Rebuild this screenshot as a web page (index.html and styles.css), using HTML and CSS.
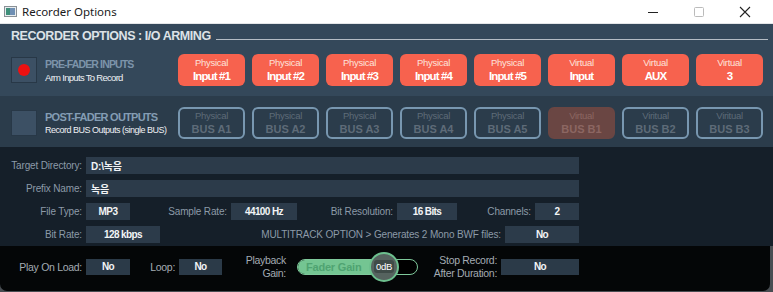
FILE: index.html
```html
<!DOCTYPE html>
<html lang="en">
<head>
  <meta charset="UTF-8" />
  <title>Recorder Options</title>
  <link rel="stylesheet" href="styles.css">
</head>
<body>

  <div class="window">
    <div class="titlebar">
      <svg class="app-icon" width="13" height="11" viewBox="0 0 13 11">
        <rect x="0.5" y="0.5" width="12" height="10" fill="#e8ecee" stroke="#8a9096"/>
        <rect x="2" y="2" width="4" height="7" fill="#3f8f7a"/>
        <rect x="6" y="2" width="5" height="7" fill="#6f8fb4"/>
      </svg>
      <span class="window-title">Recorder Options</span>
      <div class="window-controls">
        <svg width="46" height="24" viewBox="0 0 46 24"><path d="M18 12.5h10" stroke="#222" stroke-width="1"/></svg>
        <svg width="46" height="24" viewBox="0 0 46 24"><rect x="18.5" y="7.5" width="9" height="9" rx="1" fill="none" stroke="#bbb" stroke-width="1"/></svg>
        <svg width="46" height="24" viewBox="0 0 46 24"><path d="M18 7l10 10M28 7L18 17" stroke="#222" stroke-width="1.1"/></svg>
      </div>
    </div>

    <div class="arming">
      <div class="section-title">RECORDER OPTIONS : I/O ARMING</div>
      <div class="io-row">
        <div class="io-label">
          <div class="check"><span class="dot"></span></div>
          <div>
            <div class="io-name">PRE-FADER INPUTS</div>
            <div class="io-desc">Arm Inputs To Record</div>
          </div>
        </div>
        <div class="io-buttons" id="inputs"></div>
      </div>
    </div>

    <div class="io-row post">
      <div class="io-label">
        <div class="check"></div>
        <div>
          <div class="io-name">POST-FADER OUTPUTS</div>
          <div class="io-desc">Record BUS Outputs (single BUS)</div>
        </div>
      </div>
      <div class="io-buttons" id="outputs"></div>
    </div>

    <div class="form">
      <div class="form-row">
        <label class="lbl w82">Target Directory:</label>
        <div class="box text wide">D:\녹음</div>
      </div>
      <div class="form-row">
        <label class="lbl w82">Prefix Name:</label>
        <div class="box text wide">녹음</div>
      </div>
      <div class="form-row">
        <label class="lbl w82">File Type:</label>
        <div class="box w44">MP3</div>
        <label class="lbl w97">Sample Rate:</label>
        <div class="box w66">44100 Hz</div>
        <label class="lbl w96">Bit Resolution:</label>
        <div class="box w60">16 Bits</div>
        <label class="lbl w73">Channels:</label>
        <div class="box w44">2</div>
      </div>
      <div class="form-row">
        <label class="lbl w82">Bit Rate:</label>
        <div class="box w74">128 kbps</div>
        <label class="lbl w341">MULTITRACK OPTION &gt; Generates 2 Mono BWF files:</label>
        <div class="box w74">No</div>
      </div>
    </div>

    <div class="playback">
      <label class="lbl dark w81">Play On Load:</label>
      <div class="box w44">No</div>
      <label class="lbl dark w46">Loop:</label>
      <div class="box w43">No</div>
      <label class="lbl dark two-line w68">Playback<br>Gain:</label>
      <div class="fader">
        <div class="fader-fill"><span>Fader Gain</span></div>
        <div class="knob"><span>0dB</span></div>
      </div>
      <label class="lbl dark two-line w79">Stop Record:<br>After Duration:</label>
      <div class="box w78">No</div>
    </div>
  </div>

  <script>
    const inputs = [
      ["Physical", "Input #1"], ["Physical", "Input #2"], ["Physical", "Input #3"],
      ["Physical", "Input #4"], ["Physical", "Input #5"], ["Virtual", "Input"],
      ["Virtual", "AUX"], ["Virtual", "3"]
    ];
    const outputs = [
      ["Physical", "BUS A1"], ["Physical", "BUS A2"], ["Physical", "BUS A3"],
      ["Physical", "BUS A4"], ["Physical", "BUS A5"], ["Virtual", "BUS B1", true],
      ["Viritual", "BUS B2"], ["Viritual", "BUS B3"]
    ];

    function addButtons(el, list, cls) {
      list.forEach(([top, name, on]) => {
        const btn = document.createElement("div");
        btn.className = "io-btn " + cls + (on ? " on" : "");
        btn.innerHTML = `<span class="kind">${top}</span><span class="name">${name}</span>`;
        el.appendChild(btn);
      });
    }

    addButtons(document.getElementById("inputs"), inputs, "armed");
    addButtons(document.getElementById("outputs"), outputs, "idle");
  </script>

</body>
</html>
```

FILE: styles.css
```css
body {
  margin: 0;
  background: #484d52;
  font-family: 'Liberation Sans', Arial, 'Noto Sans CJK KR', sans-serif;
}

.window {
  width: 773px;
  height: 292px;
  display: flex;
  flex-direction: column;
  overflow: hidden;
  white-space: nowrap;
}

.titlebar {
  height: 23px;
  flex-shrink: 0;
  background: #fff;
  border-bottom: 1px solid #e4e6e8;
  display: flex;
  align-items: center;
  padding-left: 4px;
  font-family: 'Noto Sans', 'Open Sans', sans-serif;
}

.app-icon {
  margin-right: 5px;
}

.window-title {
  font-size: 11.5px;
  color: #1a1a1a;
}

.window-controls {
  margin-left: auto;
  display: flex;
  margin-right: 5px;
}

.arming {
  background: #34485a;
  padding: 2px 0 10px;
}

.section-title {
  height: 20px;
  display: flex;
  align-items: center;
  padding-left: 11px;
  font-size: 12.5px;
  font-weight: bold;
  letter-spacing: -0.45px;
  color: #dde2e7;
}

.section-title::after {
  content: "";
  flex: 1;
  height: 1px;
  background: #b4bcc4;
  margin: 7px 5px 0 5px;
}

.io-row {
  display: flex;
  align-items: center;
  margin-top: 8px;
}

.io-row.post {
  margin-top: 0;
  background: #2b3c4b;
  padding: 11px 0 8px;
}

.io-label {
  width: 167px;
  padding-left: 11px;
  display: flex;
  align-items: center;
  gap: 8px;
}

.check {
  width: 24px;
  height: 24px;
  background: #3c5064;
  border: 1px solid #283847;
  display: flex;
  align-items: center;
  justify-content: center;
  flex-shrink: 0;
}

.dot {
  width: 12px;
  height: 12px;
  border-radius: 50%;
  background: #ee1111;
}

.io-name {
  font-size: 10.5px;
  font-weight: bold;
  letter-spacing: -0.85px;
  color: #7d94aa;
}

.post .io-name {
  font-size: 11px;
  letter-spacing: -0.75px;
  color: #849db4;
}

.io-desc {
  font-size: 9.5px;
  letter-spacing: -0.7px;
  color: #eef1f4;
  margin-top: 2px;
}

.post .io-desc {
  font-size: 9px;
  letter-spacing: -0.5px;
}

.io-buttons {
  display: flex;
  gap: 7px;
}

.io-btn {
  width: 67px;
  height: 32px;
  box-sizing: border-box;
  border-radius: 6px;
  display: flex;
  flex-direction: column;
  align-items: center;
  justify-content: center;
}

.io-btn .kind {
  font-size: 9.5px;
  letter-spacing: -0.3px;
  line-height: 12px;
}

.io-btn .name {
  font-size: 11.5px;
  font-weight: bold;
  letter-spacing: -0.9px;
  line-height: 15px;
}

.io-btn.armed {
  background: #f7624e;
  color: #fff;
}

.io-btn.armed .kind {
  color: #fde3dc;
}

.io-btn.idle {
  border: 2px solid #7897b0;
  color: #5e6b78;
}

.io-btn.idle .name {
  letter-spacing: 0;
  font-size: 11px;
}

.io-btn.idle.on {
  background: #6a4643;
  border-color: #6a4643;
  color: #8c6662;
}

.form {
  background: #151f29;
  padding: 10px 0 3px;
  display: flex;
  flex-direction: column;
  gap: 6px;
}

.form-row {
  display: flex;
  align-items: center;
  height: 17px;
}

.lbl {
  font-size: 10px;
  letter-spacing: -0.15px;
  color: #8c9aa8;
  text-align: right;
  padding-right: 4px;
  box-sizing: border-box;
  flex-shrink: 0;
}

.box {
  height: 17px;
  background: #2c3b4a;
  color: #f2f4f6;
  font-size: 10px;
  font-weight: bold;
  letter-spacing: -0.6px;
  display: flex;
  align-items: center;
  justify-content: center;
  box-sizing: border-box;
  flex-shrink: 0;
}

.box.text {
  justify-content: flex-start;
  padding-left: 5px;
  letter-spacing: -0.2px;
}

.wide { width: 493px; }
.w43 { width: 43px; }
.w44 { width: 44px; }
.w46 { width: 49px; }
.w60 { width: 60px; }
.w66 { width: 66px; }
.w68 { width: 68px; }
.w73 { width: 78px; }
.w74 { width: 74px; }
.w78 { width: 78px; }
.w79 { width: 79px; }
.w81 { width: 86px; }
.w82 { width: 86px; }
.w96 { width: 100px; }
.w97 { width: 101px; }
.w341 { width: 345px; }

.playback {
  flex: 1;
  background: #040607;
  border-radius: 0 0 7px 7px;
  margin: 0 3px 1px 0;
  padding-bottom: 4px;
  display: flex;
  align-items: center;
}

.playback .box {
  height: 16px;
  background: #2b3a48;
}

.lbl.dark {
  color: #a3abb3;
  font-size: 10.5px;
  letter-spacing: -0.3px;
}

.lbl.two-line {
  line-height: 13px;
}

.fader {
  position: relative;
  width: 121px;
  height: 16px;
  box-sizing: border-box;
  border: 1px solid #7fc99b;
  border-radius: 8px;
  background: #000;
  margin: 0 4px 0 7px;
}

.fader-fill {
  width: 84px;
  height: 100%;
  background: #74c592;
  border-radius: 7px 0 0 7px;
  display: flex;
  align-items: center;
  padding-left: 8px;
  box-sizing: border-box;
}

.fader-fill span {
  font-size: 11px;
  font-weight: bold;
  color: #4fa371;
  letter-spacing: -0.2px;
}

.knob {
  position: absolute;
  left: 71px;
  top: -8px;
  width: 30px;
  height: 30px;
  box-sizing: border-box;
  border-radius: 50%;
  border: 2px solid #6dbf8e;
  background: #56635f;
  display: flex;
  align-items: center;
  justify-content: center;
}

.knob span {
  background: #3f4b48;
  border-radius: 3px;
  color: #fff;
  font-size: 9.5px;
  letter-spacing: -0.3px;
  padding: 1px 2px;
}
```
